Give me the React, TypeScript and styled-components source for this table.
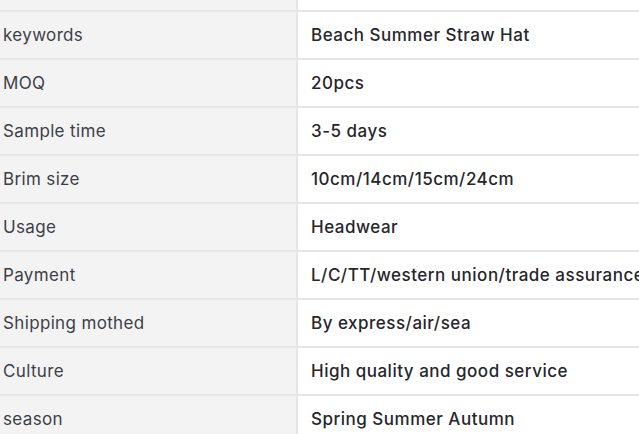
import React from "react";
import styled, { createGlobalStyle } from "styled-components";

const Global = createGlobalStyle`
  html, body { margin: 0; padding: 0; background: #ffffff; overflow: hidden; }
  body { width: 639px; height: 434px; }
`;

const Table = styled.div`
  display: grid;
  grid-template-columns: 298px 440px;
  width: 738px;
  font-family: Inter, "Noto Sans", sans-serif;
  font-size: 17px;
`;

const Row = styled.div`
  display: contents;
`;

const LabelCell = styled.div<{ $h: number }>`
  height: ${(p) => p.$h}px;
  background: #f3f3f3;
  border-right: 2px solid #e6e6e6;
  border-bottom: 2px solid #e6e6e6;
  display: flex;
  align-items: center;
  padding-left: 3px;
  color: #3d3f48;
  font-weight: 400;
  letter-spacing: 0.35px;
  white-space: nowrap;
`;

const ValueCell = styled.div<{ $h: number }>`
  height: ${(p) => p.$h}px;
  background: #ffffff;
  border-bottom: 2px solid #e6e6e6;
  display: flex;
  align-items: center;
  padding-left: 13px;
  color: #26262b;
  font-weight: 500;
  letter-spacing: 0.5px;
  white-space: nowrap;
  overflow: hidden;
`;

const rows: [string, string][] = [
  ["keywords", "Beach Summer Straw Hat"],
  ["MOQ", "20pcs"],
  ["Sample time", "3-5 days"],
  ["Brim size", "10cm/14cm/15cm/24cm"],
  ["Usage", "Headwear"],
  ["Payment", "L/C/TT/western union/trade assurance"],
  ["Shipping mothed", "By express/air/sea"],
  ["Culture", "High quality and good service"],
  ["season", "Spring Summer Autumn"],
];

export default function App() {
  return (
    <>
      <Global />
      <Table>
        <Row>
          <LabelCell $h={10} />
          <ValueCell $h={10} />
        </Row>
        {rows.map(([k, v]) => (
          <Row key={k}>
            <LabelCell $h={46}>{k}</LabelCell>
            <ValueCell $h={46}>{v}</ValueCell>
          </Row>
        ))}
      </Table>
    </>
  );
}
